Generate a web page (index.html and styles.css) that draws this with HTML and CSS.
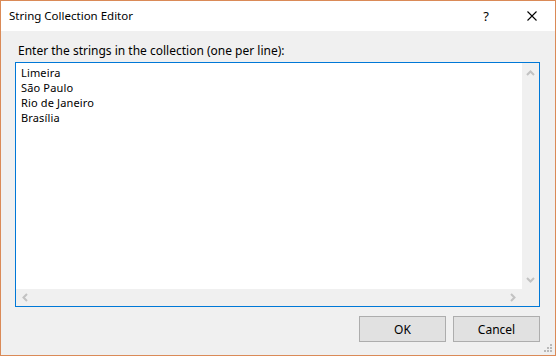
FILE: index.html
```html
<!DOCTYPE html>
<html lang="en">
<head>
    <meta charset="UTF-8">
    <title>String Collection Editor</title>
    <link rel="stylesheet" href="styles.css">
</head>
<body>
    <div class="window">
        <div class="titlebar">
            <span class="title">String Collection Editor</span>
            <div class="caption-buttons">
                <span class="help">?</span>
                <span class="close">
                    <svg width="10" height="10" viewBox="0 0 10 10">
                        <path d="M0.5 0.5 L9.5 9.5 M9.5 0.5 L0.5 9.5" stroke="#000" stroke-width="1.1" fill="none"/>
                    </svg>
                </span>
            </div>
        </div>
        <div class="client">
            <div class="prompt">Enter the strings in the collection (one per line):</div>
            <div class="editor">
                <div class="lines">
                    <div>Limeira</div>
                    <div>São Paulo</div>
                    <div>Rio de Janeiro</div>
                    <div>Brasília</div>
                </div>
                <div class="vscroll">
                    <svg width="9" height="6" viewBox="0 0 9 6"><polyline points="1,5 4.5,1.5 8,5" stroke="#c2c2c2" stroke-width="2" fill="none"/></svg>
                    <svg width="9" height="6" viewBox="0 0 9 6"><polyline points="1,1 4.5,4.5 8,1" stroke="#c2c2c2" stroke-width="2" fill="none"/></svg>
                </div>
                <div class="hscroll">
                    <svg width="6" height="9" viewBox="0 0 6 9"><polyline points="5,1 1.5,4.5 5,8" stroke="#c2c2c2" stroke-width="2" fill="none"/></svg>
                    <svg width="6" height="9" viewBox="0 0 6 9"><polyline points="1,1 4.5,4.5 1,8" stroke="#c2c2c2" stroke-width="2" fill="none"/></svg>
                </div>
                <div class="corner"></div>
            </div>
            <div class="buttons">
                <button class="btn">OK</button>
                <button class="btn">Cancel</button>
            </div>
            <svg class="grip" width="9" height="9" viewBox="0 0 9 9">
                <rect x="6" y="0" width="2" height="2" fill="#b9b9b9"/>
                <rect x="3" y="3" width="2" height="2" fill="#b9b9b9"/>
                <rect x="6" y="3" width="2" height="2" fill="#b9b9b9"/>
                <rect x="0" y="6" width="2" height="2" fill="#b9b9b9"/>
                <rect x="3" y="6" width="2" height="2" fill="#b9b9b9"/>
                <rect x="6" y="6" width="2" height="2" fill="#b9b9b9"/>
            </svg>
        </div>
    </div>
</body>
</html>
```

FILE: styles.css
```css
body {
    margin: 0;
    font-family: "Noto Sans", "Liberation Sans", sans-serif;
    font-size: 12px;
    color: #000;
}
.window {
    width: 556px;
    height: 356px;
    box-sizing: border-box;
    border: 1px solid #da8a57;
    display: flex;
    flex-direction: column;
    background-color: #f0f0f0;
}
.titlebar {
    height: 30px;
    background-color: #fff;
    display: flex;
    align-items: center;
    justify-content: space-between;
    padding-left: 8px;
}
.title {
    font-size: 11.5px;
    line-height: 16px;
}
.caption-buttons {
    display: flex;
    align-items: center;
    height: 100%;
}
.help {
    width: 46px;
    text-align: center;
    font-size: 13px;
}
.close {
    width: 46px;
    display: flex;
    justify-content: center;
    align-items: center;
}
.client {
    flex: 1;
    position: relative;
    display: flex;
    flex-direction: column;
    padding: 12px 15px 13px 14px;
}
.prompt {
    line-height: 15px;
    padding-left: 3px;
    margin-bottom: 4px;
}
.editor {
    height: 245px;
    box-sizing: border-box;
    border: 1px solid #0078d7;
    display: grid;
    grid-template-columns: 1fr 17px;
    grid-template-rows: 1fr 17px;
    background-color: #fff;
}
.lines {
    padding: 2px 5px;
    font-size: 11px;
    letter-spacing: 0.15px;
    line-height: 15px;
}
.vscroll {
    background-color: #f0f0f0;
    display: flex;
    flex-direction: column;
    justify-content: space-between;
    align-items: center;
    padding: 7px 0 6px;
}
.hscroll {
    background-color: #f0f0f0;
    display: flex;
    justify-content: space-between;
    align-items: center;
    padding: 0 6px 0 6px;
}
.corner {
    background-color: #f0f0f0;
}
.buttons {
    display: flex;
    justify-content: flex-end;
    gap: 7px;
    margin-top: 9px;
}
.btn {
    width: 87px;
    height: 26px;
    box-sizing: border-box;
    border: 1px solid #adadad;
    background-color: #e1e1e1;
    font-family: inherit;
    font-size: 12px;
    color: #000;
    padding: 0;
}
.grip {
    position: absolute;
    right: 2px;
    bottom: 2px;
}
```
